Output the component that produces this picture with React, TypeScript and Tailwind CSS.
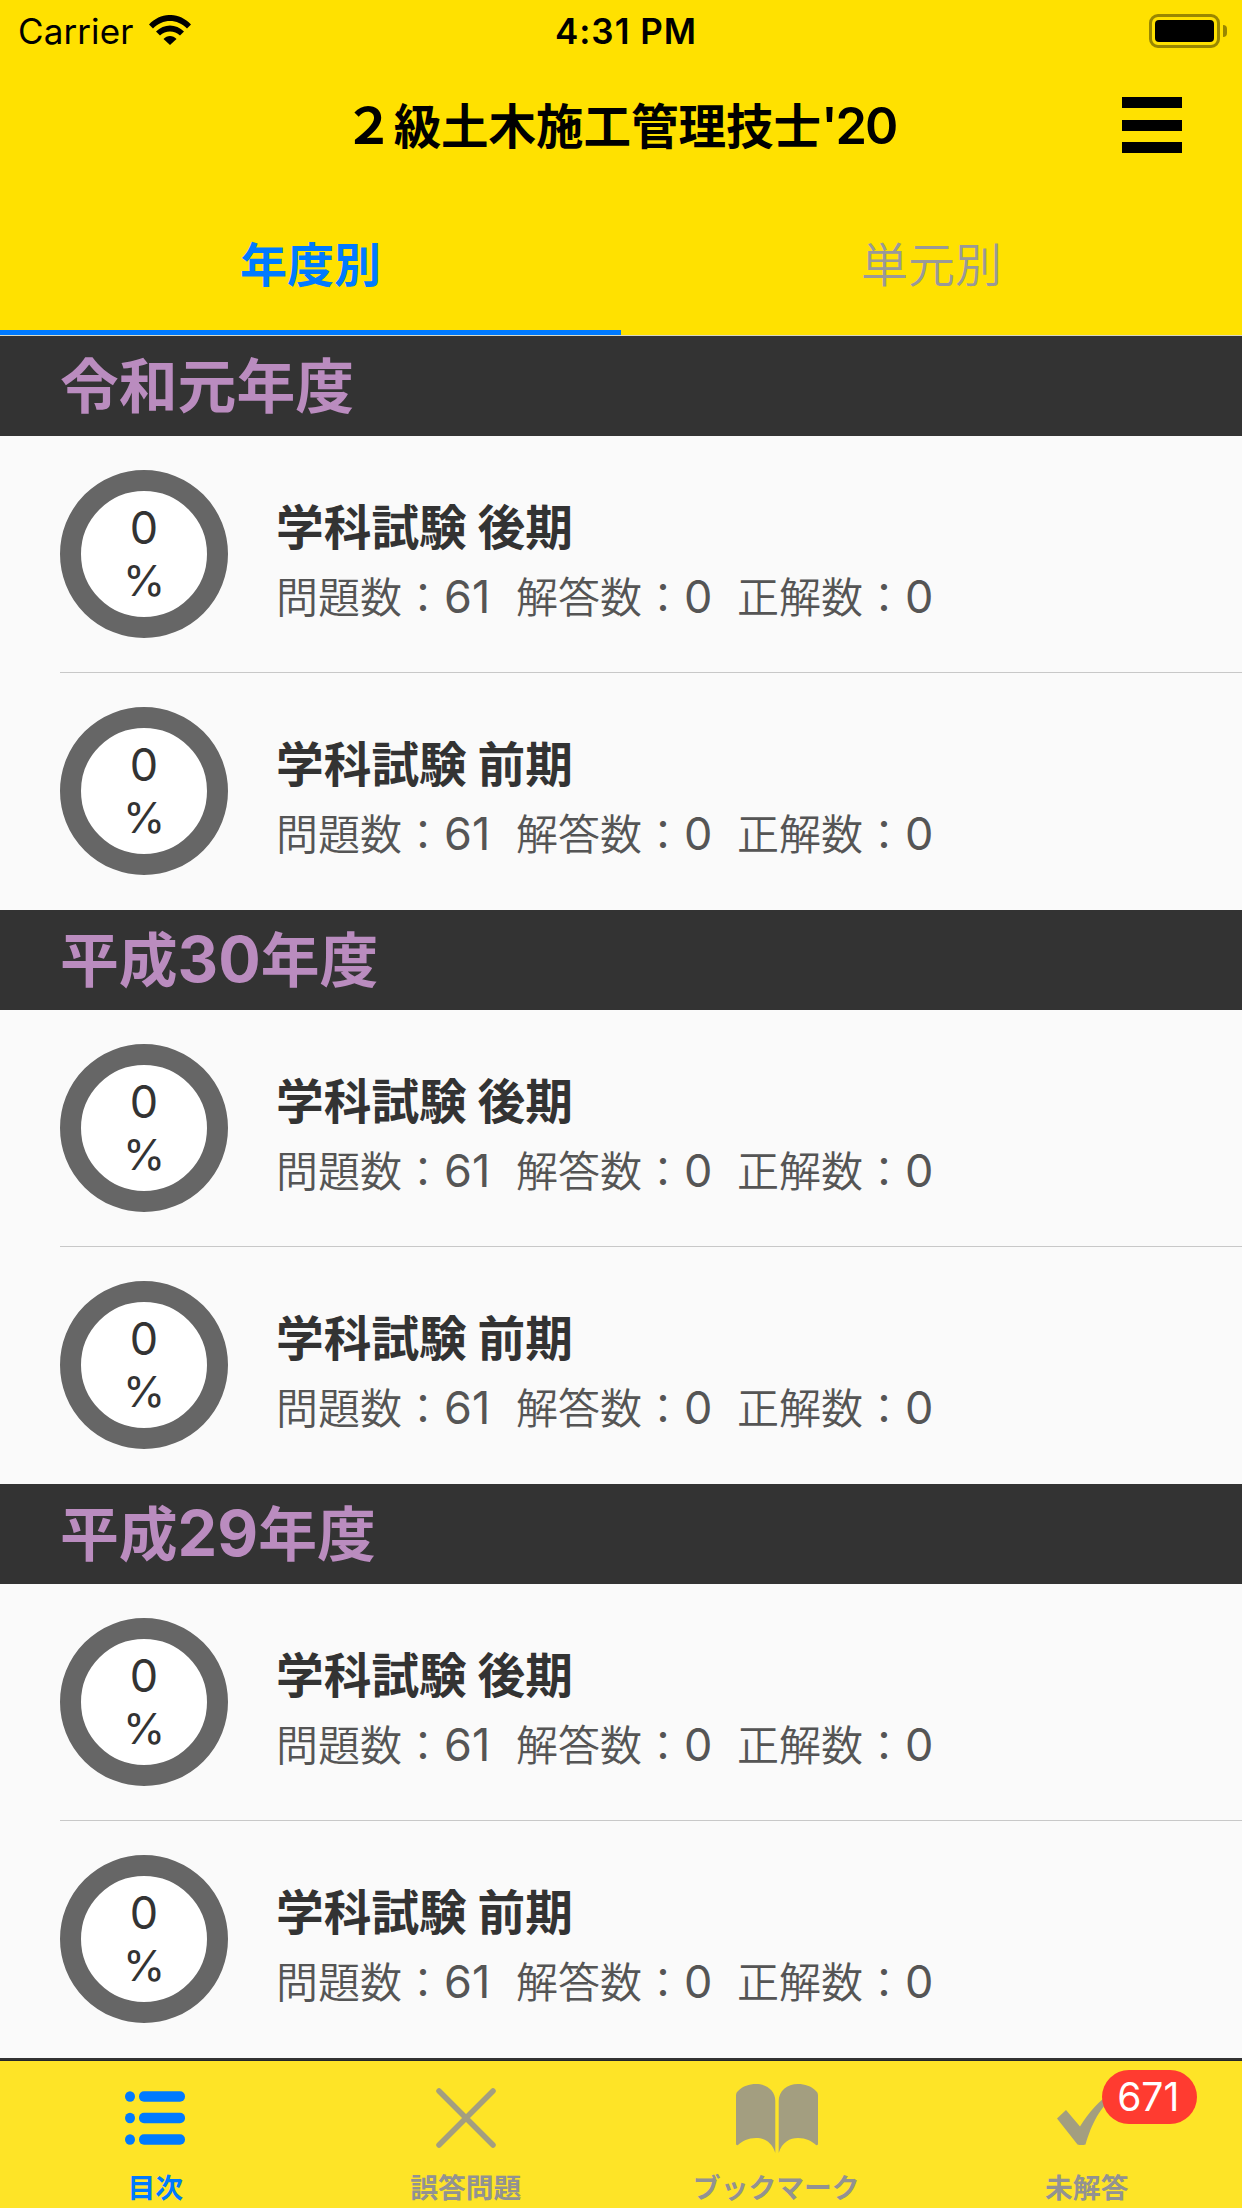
import { ReactNode } from 'react';

interface Exam {
  title: string;
  total: number;
  answered: number;
  correct: number;
}

interface Section {
  label: ReactNode;
  exams: Exam[];
}

const exams: Exam[] = [
  { title: '学科試験 後期', total: 61, answered: 0, correct: 0 },
  { title: '学科試験 前期', total: 61, answered: 0, correct: 0 }
];

const sections: Section[] = [
  { label: '令和元年度', exams },
  { label: <>平成<Num className="text-[63px]">30</Num>年度</>, exams },
  { label: <>平成<Num className="text-[63px]">29</Num>年度</>, exams }
];

// Latin digits sit a little larger than the kanji around them
function Num({ children, className = '' }: { children: ReactNode; className?: string }) {
  return <span className={`font-['Inter','Noto_Sans_CJK_JP',sans-serif] leading-none ${className}`}>{children}</span>;
}

function StatusBar() {
  return (
    <div className="grid grid-cols-3 items-center h-[60px] pt-[2px] pl-[18px] pr-[15px] font-['Inter',sans-serif] text-[35px]">
      <div className="flex items-center gap-[16px]">
        <span className="tracking-[0.1px]">Carrier</span>
        <svg className="w-[42px] h-[30px] mb-[2px]" viewBox="0 0 42 30" fill="currentColor">
          <path d="M0 9.5C12-3.2 30-3.2 42 9.5L38 13.5C28.500 3.500 13.500 3.500 4 13.500Z" />
          <path d="M7 16.500C15 8.500 27 8.500 35 16.500L31 20.500C25.500 15 16.500 15 11 20.500Z" />
          <path d="M14.500 24C18 20 24 20 27.500 24L21 30Z" />
        </svg>
      </div>
      <span className="text-center font-semibold tracking-[1px] pl-[7px]">4:31 PM</span>
      <div className="flex items-center justify-end gap-[3px] pb-[1px]">
        <div className="w-[71px] h-[34px] rounded-[9px] border-[3px] border-[#998700] p-[3px]">
          <div className="h-full rounded-[4px] bg-black" />
        </div>
        <div className="w-[4px] h-[12px] rounded-r-full bg-[#998700]" />
      </div>
    </div>
  );
}

function Header() {
  return (
    <header className="bg-[#ffe100] text-black">
      <StatusBar />
      <div className="grid grid-cols-[120px_1fr_120px] items-center h-[132px]">
        <div />
        <h1 className="text-center text-[47.500px] font-bold leading-none whitespace-nowrap pr-[2px] pb-[1px]">
          <Num className="text-[50px]">２</Num>級土木施工管理技士<Num className="text-[50.500px] font-semibold tracking-[-2px]">'20</Num>
        </h1>
        <button className="w-[60px] h-[56px] mb-[2px] flex flex-col justify-between" aria-label="menu">
          <span className="block h-[11px] w-full bg-black" />
          <span className="block h-[11px] w-full bg-black" />
          <span className="block h-[11px] w-full bg-black" />
        </button>
      </div>
      <div className="grid grid-cols-2 h-[144px] border-b border-[#d9d9c0] text-[47px] leading-none">
        <button className="border-b-[5px] border-[#007aff] font-bold text-[#007aff] pt-[1px]">年度別</button>
        <button className="font-[350] text-[#999999] pb-[4px]">単元別</button>
      </div>
    </header>
  );
}

function ExamRow({ exam, last }: { exam: Exam; last: boolean }) {
  const percent = Math.round((exam.correct / exam.total) * 100);
  return (
    <li className="pl-[60px] h-[237px]">
      <div className={`flex items-center h-full border-b ${last ? 'border-transparent' : 'border-[#c8c8c8]'}`}>
        <div className="w-[168px] h-[168px] rounded-full border-[21px] border-[#666666] bg-white flex flex-col items-center justify-center font-['Inter',sans-serif] text-[45px] leading-[53px] text-[#333333]">
          <span>{percent}</span>
          <span className="text-[43px]">%</span>
        </div>
        <div className="ml-[48px] pt-[12px]">
          <h3 className="text-[47.7px] leading-[70px] font-bold text-[#333333]">{exam.title}</h3>
          <p className="flex text-[42px] leading-[70px] font-[350] text-[#555555]">
            <Stat label="問題数" value={exam.total} className="w-[240px]" />
            <Stat label="解答数" value={exam.answered} className="w-[221px]" />
            <Stat label="正解数" value={exam.correct} />
          </p>
        </div>
      </div>
    </li>
  );
}

function Stat({ label, value, className = '' }: { label: string; value: number; className?: string }) {
  return (
    <span className={className}>
      {label}：<Num className="text-[45px] font-normal">{value}</Num>
    </span>
  );
}

function ListIcon() {
  return (
    <svg className="w-[60px] h-[54px]" viewBox="0 0 60 54" fill="currentColor">
      <ellipse cx="5" cy="5.500" rx="5" ry="5.200" />
      <ellipse cx="5" cy="27" rx="5" ry="5.200" />
      <ellipse cx="5" cy="48.500" rx="5" ry="5.200" />
      <rect x="14" y="0.300" width="46" height="10.400" rx="5" />
      <rect x="14" y="21.800" width="46" height="10.400" rx="5" />
      <rect x="14" y="43.300" width="46" height="10.400" rx="5" />
    </svg>
  );
}

function CrossIcon() {
  return (
    <svg className="w-[60px] h-[60px]" viewBox="0 0 60 60" fill="none" stroke="currentColor" strokeWidth="5.500" strokeLinecap="round">
      <path d="M3 3 57 57M57 3 3 57" />
    </svg>
  );
}

function BookIcon() {
  return (
    <svg className="w-[82px] h-[69px] mt-[2px] ml-[1px]" viewBox="0 0 82 69" fill="currentColor">
      <path d="M0 11Q0 8.500 2 7C7 2 13 0 20 0C31 0 39.300 7 39.300 17V69C36 58 28 54 20 54C12 54 6.500 57 2 61Q0 61.500 0 60Z" />
      <path d="M82 11Q82 8.500 80 7C75 2 69 0 62 0C51 0 42.700 7 42.700 17V69C46 58 54 54 62 54C70 54 75.500 57 80 61Q82 61.500 82 60Z" />
    </svg>
  );
}

function CheckIcon() {
  return (
    <svg className="w-[60px] h-[54px]" viewBox="0 0 60 54" fill="currentColor">
      <path d="M9 19 0 27.500 20.500 53.500Q24.500 54.500 28.500 53.500C35 32 42 18 60 1L56 0C42 10 32 21 23 35.500Z" />
    </svg>
  );
}

function TabItem({ icon, label, active, badge }: { icon: ReactNode; label: string; active?: boolean; badge?: number }) {
  return (
    <button className={`flex flex-col items-center ${active ? 'text-[#007aff]' : 'text-[#a39e80]'}`}>
      <span className="relative flex items-center justify-center h-[69px] mt-[22px]">
        {icon}
        {badge !== undefined && (
          <span className="absolute left-[45px] top-[-13px] w-[95px] h-[54px] pr-[2px] rounded-full bg-[#ff3b30] text-white font-['Inter',sans-serif] text-[39px] leading-[53px]">
            {badge}
          </span>
        )}
      </span>
      <span className={`mt-[19px] text-[27.8px] leading-[30px] font-bold ${active ? '' : 'text-[#929292]'}`}>{label}</span>
    </button>
  );
}

export default function App() {
  return (
    <div className="flex flex-col w-[1242px] h-[2208px] overflow-hidden bg-[#fafafa] font-['Noto_Sans_CJK_JP',sans-serif]" lang="ja">
      <Header />
      <main className="flex-1 bg-[#333333]">
        {sections.map((section, i) => (
          <section key={i}>
            <h2 className="h-[100px] pl-[60px] bg-[#333333] text-[#ba8cbf] text-[58.800px] leading-[94px] font-bold">{section.label}</h2>
            <ul className="bg-[#fafafa]">
              {section.exams.map((exam, j) => (
                <ExamRow key={j} exam={exam} last={j === section.exams.length - 1} />
              ))}
            </ul>
          </section>
        ))}
      </main>
      <nav className="grid grid-cols-4 h-[148px] border-t border-[#22262a] bg-[#fee427]">
        <TabItem icon={<ListIcon />} label="目次" active />
        <TabItem icon={<CrossIcon />} label="誤答問題" />
        <TabItem icon={<BookIcon />} label="ブックマーク" />
        <TabItem icon={<CheckIcon />} label="未解答" badge={671} />
      </nav>
    </div>
  );
}
